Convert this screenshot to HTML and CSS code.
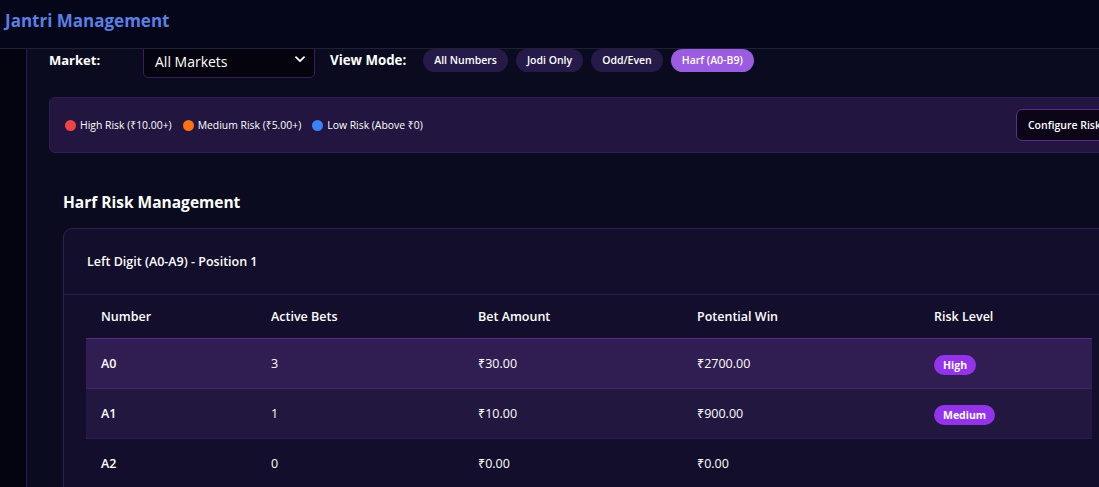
FILE: index.html
```html
<!DOCTYPE html>
<html>
<head>
<meta charset="utf-8">
<link rel="stylesheet" href="styles.css">
</head>
<body>
<header class="topbar"><h1 class="brand">Jantri Management</h1></header>
<div class="layout">
  <aside class="sidebar"></aside>
  <main class="main">
    <div class="controls">
      <label class="ctl-label market-label">Market:</label>
      <div class="select">
        <span class="select-text">All Markets</span>
        <svg class="chev" width="10" height="7" viewBox="0 0 10 7"><path d="M1 1.2 L5 5.2 L9 1.2" fill="none" stroke="#fff" stroke-width="1.8" stroke-linecap="round" stroke-linejoin="round"/></svg>
      </div>
      <label class="ctl-label view-label">View Mode:</label>
      <div class="modes">
        <button class="mode">All Numbers</button>
        <button class="mode">Jodi Only</button>
        <button class="mode">Odd/Even</button>
        <button class="mode active">Harf (A0-B9)</button>
      </div>
    </div>

    <div class="legend">
      <div class="legend-items">
        <span class="li"><i class="dot red"></i>High Risk (₹10.00+)</span>
        <span class="li"><i class="dot orange"></i>Medium Risk (₹5.00+)</span>
        <span class="li"><i class="dot blue"></i>Low Risk (Above ₹0)</span>
      </div>
      <button class="config">Configure Risk</button>
    </div>

    <section class="section">
      <h2 class="section-title">Harf Risk Management</h2>
      <div class="card">
        <div class="card-head">Left Digit (A0-A9) - Position 1</div>
        <div class="card-body">
          <table class="risk-table">
            <colgroup>
              <col class="c1"><col class="c2"><col class="c3"><col class="c4"><col class="c5">
            </colgroup>
            <thead>
              <tr><th>Number</th><th>Active Bets</th><th>Bet Amount</th><th>Potential Win</th><th>Risk Level</th></tr>
            </thead>
            <tbody>
              <tr class="high"><td class="num">A0</td><td>3</td><td>₹30.00</td><td>₹2700.00</td><td><span class="badge">High</span></td></tr>
              <tr class="medium"><td class="num">A1</td><td>1</td><td>₹10.00</td><td>₹900.00</td><td><span class="badge">Medium</span></td></tr>
              <tr><td class="num">A2</td><td>0</td><td>₹0.00</td><td>₹0.00</td><td></td></tr>
            </tbody>
          </table>
        </div>
      </div>
    </section>
  </main>
</div>
</body>
</html>
```

FILE: styles.css
```css
* { box-sizing: border-box; }
html, body { margin: 0; padding: 0; }
body {
  background: #0a0b1e;
  color: #fff;
  font-family: "Open Sans", "Noto Sans", sans-serif;
  overflow: hidden;
  height: 487px;
}
.topbar {
  position: fixed;
  top: 0; left: 0; right: 0;
  height: 49px;
  background: #05061a;
  border-bottom: 1px solid #1d2235;
  z-index: 5;
  display: flex;
  align-items: center;
  padding-left: 5px;
}
.brand {
  margin: 0;
  font-size: 17px;
  font-weight: 700;
  color: #5b7fe3;
  margin-top: -8px;
}
.layout { display: flex; min-height: 487px; }
.sidebar {
  flex: none;
  width: 27px;
  background: #03040f;
  border-right: 1px solid #281d48;
}
.main {
  flex: none;
  width: 1124px;
  padding: 42px 22px 0 22px;
}
.controls { display: flex; align-items: center; height: 36px; margin-bottom: 19px; }
.ctl-label { font-size: 13px; font-weight: 700; }
.market-label { width: 94px; }
.select {
  width: 172px; height: 36px;
  background: #05030d;
  border: 1px solid #3a1d5e;
  border-radius: 5px;
  display: flex; align-items: center; justify-content: space-between;
  padding: 2px 9px 0 11px;
  font-size: 14px;
}
.chev { margin-top: -3px; }
.view-label { margin-left: 15px; margin-right: 17px; font-size: 13.3px; }
.modes { display: flex; gap: 8px; }
.mode {
  font-family: inherit;
  height: 23px;
  border: none;
  border-radius: 12px;
  background: #261a48;
  color: #fff;
  font-size: 10.5px;
  font-weight: 600;
  padding: 0 11px;
}
.mode.active { background: #9c5ce2; }
.legend {
  height: 56px;
  background: #221640;
  border: 1px solid #2e1f55;
  border-radius: 6px;
  display: flex; align-items: center; justify-content: space-between;
  padding: 0 15px;
}
.legend-items { display: flex; gap: 11px; font-size: 10.4px; }
.li { display: flex; align-items: center; gap: 4px; }
.dot { width: 11px; height: 11px; border-radius: 50%; display: inline-block; }
.red { background: #ef4444; }
.orange { background: #f97316; }
.blue { background: #3b82f6; }
.config {
  font-family: inherit;
  height: 32px;
  background: #0c0517;
  border: 1px solid #5a2d8e;
  border-radius: 6px;
  color: #fff;
  font-size: 10.5px;
  font-weight: 600;
  padding: 0 11px;
}
.section { padding: 0 14px; }
.section-title {
  margin: 38px 0 15px;
  font-size: 15.5px;
  font-weight: 700;
  line-height: 22px;
}
.card {
  background: #130e2b;
  border: 1px solid #2b1f4d;
  border-radius: 9px;
}
.card-head {
  padding: 24px 23px 23px;
  font-size: 12.5px;
  font-weight: 600;
  line-height: 18px;
  border-bottom: 1px solid #2c1f50;
}
.card-body { padding: 0 22px 24px; }
.risk-table { width: 100%; border-collapse: collapse; table-layout: fixed; font-size: 12.5px; }
.c1 { width: 170px; } .c2 { width: 207px; } .c3 { width: 219px; } .c4 { width: 237px; }
.risk-table th {
  text-align: left;
  font-weight: 600;
  padding: 13px 15px 13px;
  line-height: 17px;
  border-bottom: 1px solid #57298f;
}
.risk-table td {
  padding: 15px 15px;
  line-height: 19px;
  border-bottom: 1px solid #2e1c55;
}
.risk-table tr.high td { background: #301d52; border-bottom-color: #3f2468; }
.risk-table tr.medium td { background: #21173f; }
.num { font-weight: 600; }
.badge {
  display: inline-block;
  vertical-align: middle;
  margin: -2px 0;
  background: #9333ea;
  color: #fff;
  font-weight: 700;
  font-size: 10.5px;
  line-height: 20px;
  height: 20px;
  padding: 0 9px;
  border-radius: 10px;
}
```
